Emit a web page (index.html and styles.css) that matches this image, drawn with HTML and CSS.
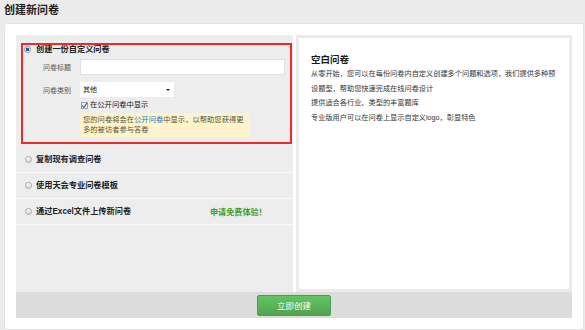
FILE: index.html
```html
<!DOCTYPE html>
<html lang="zh-CN">
<head>
  <meta charset="UTF-8">
  <meta name="viewport" content="width=device-width, initial-scale=1.0">
  <title>创建新问卷</title>
  <link rel="stylesheet" href="styles.css">
</head>
<body>
  <h1 class="page-title">创建新问卷</h1>
  <div class="card">
    <div class="main">
      <div class="options">
        <div class="option-box">
          <div class="option-head">
            <span class="radio checked"></span>
            <span class="option-name">创建一份自定义问卷</span>
          </div>
          <div class="field">
            <label class="field-label">问卷标题</label>
            <input class="text-input" type="text">
          </div>
          <div class="field">
            <label class="field-label">问卷类别</label>
            <div class="select">其他</div>
          </div>
          <div class="check-row">
            <span class="checkbox">
              <svg width="7" height="7" viewBox="0 0 7 7"><path d="M1 3.6 L2.8 5.4 L6 1.2" fill="none" stroke="#3a5f9c" stroke-width="1.2"/></svg>
            </span>
            <span>在公开问卷中显示</span>
          </div>
          <div class="tip">您的问卷将会在<a href="#">公开问卷</a>中显示，以帮助您获得更<br>多的被访者参与答卷</div>
        </div>
        <div class="option-row">
          <span class="radio"></span>
          <span class="option-name">复制现有调查问卷</span>
        </div>
        <div class="option-row">
          <span class="radio"></span>
          <span class="option-name">使用天会专业问卷模板</span>
        </div>
        <div class="option-row">
          <span class="radio"></span>
          <span class="option-name wide">通过Excel文件上传新问卷</span>
          <span class="trial">申请免费体验！</span>
        </div>
      </div>
      <div class="preview">
        <h2 class="preview-title">空白问卷</h2>
        <p>从零开始，您可以在每份问卷内自定义创建多个问题和选项，我们提供多种预设题型，帮助您快速完成在线问卷设计</p>
        <p>提供适合各行业、类型的丰富题库</p>
        <p>专业版用户可以在问卷上显示自定义logo，彰显特色</p>
      </div>
    </div>
    <div class="action-bar">
      <button class="create-btn" type="button">立即创建</button>
    </div>
  </div>
</body>
</html>
```

FILE: styles.css
```css
body {
  margin: 0;
  background-color: #ebebeb;
  font-family: "Liberation Sans", "Noto Sans CJK SC", sans-serif;
  color: #333;
}
.page-title {
  margin: 0;
  padding: 3px 4px 5px;
  font-size: 11px;
  line-height: 15px;
  color: #222;
}
.card {
  margin: 0 1px 0 4px;
  padding: 11px 11px 11px;
  background: white;
  border: 1px solid #e2e2e2;
  border-radius: 3px;
}
.main {
  display: flex;
  gap: 3px;
  height: 257px;
}
.options {
  width: 277px;
  padding-top: 8px;
  background-color: #ededed;
  box-sizing: border-box;
}
.option-box {
  margin: 0 1px 0 5px;
  padding-bottom: 5px;
  border: 2px solid #ee2a2a;
}
.option-head {
  display: flex;
  align-items: center;
  height: 9px;
  padding-left: 1px;
}
.radio {
  width: 5px;
  height: 5px;
  border: 1px solid #a9a9a9;
  border-radius: 50%;
  background: linear-gradient(#fdfdfd, #d6d6d6);
  flex-shrink: 0;
}
.radio.checked {
  background: radial-gradient(circle, #2b57a0 0 1.6px, #dfe6f0 2px);
  border-color: #8c98a8;
}
.option-name {
  margin-left: 4px;
  font-size: 8.2px;
  font-weight: bold;
  line-height: 10px;
  color: #222;
}
.option-head .option-name {
  margin-left: 5px;
}
.field {
  display: flex;
  align-items: center;
  margin-top: 5px;
}
.field + .field {
  margin-top: 7px;
}
.field-label {
  width: 37px;
  padding-left: 20px;
  font-size: 7px;
  color: #555;
}
.text-input {
  width: 205px;
  height: 16px;
  margin: 0;
  padding: 0 3px;
  border: 1px solid #e0e0e0;
  box-sizing: border-box;
  background: white;
}
.select {
  position: relative;
  width: 94px;
  height: 15px;
  padding-left: 3px;
  box-sizing: border-box;
  background: white;
  font-size: 7px;
  line-height: 15px;
  color: #222;
}
.select::after {
  content: "";
  position: absolute;
  right: 4px;
  top: 7px;
  border-left: 2px solid transparent;
  border-right: 2px solid transparent;
  border-top: 2px solid #222;
}
.check-row {
  display: flex;
  align-items: center;
  margin: 4px 0 0 58px;
  font-size: 7.3px;
  line-height: 8px;
  color: #222;
}
.checkbox {
  display: flex;
  width: 7px;
  height: 7px;
  margin-right: 2px;
  border: 1px solid #9aa3ad;
  background: #f3f3f3;
  box-sizing: border-box;
  align-items: center;
  justify-content: center;
}
.checkbox svg {
  flex-shrink: 0;
}
.tip {
  width: 170px;
  margin: 4px 0 0 57px;
  padding: 2px 3px 2px;
  box-sizing: border-box;
  background-color: #fdf4cb;
  border-radius: 3px;
  font-size: 7.3px;
  line-height: 10px;
  color: #5f5238;
}
.tip a {
  color: #2a78d0;
  text-decoration: none;
}
.option-row {
  display: flex;
  align-items: center;
  height: 25px;
  padding-left: 9px;
  border-bottom: 1px solid #f8f8f8;
}
.option-box + .option-row {
  margin-top: 3px;
}
.option-name.wide {
  width: 174px;
}
.trial {
  font-size: 8.1px;
  font-weight: bold;
  color: #3c9e2e;
}
.preview {
  flex: 1;
  padding: 15px 12px 0 12px;
  border: 3px solid #ebebeb;
  background: white;
}
.preview-title {
  margin: 0 0 1px;
  font-size: 9.5px;
  line-height: 13px;
  color: #1a1a1a;
}
.preview p {
  margin: 0;
  font-size: 7.2px;
  line-height: 14.5px;
  color: #333;
}
.action-bar {
  display: flex;
  justify-content: center;
  align-items: center;
  height: 26px;
  background-color: #dcdcdc;
}
.create-btn {
  width: 74px;
  height: 21px;
  padding: 0;
  border: 1px solid #4b9e4b;
  border-radius: 2px;
  background: linear-gradient(#62c462, #51a351);
  color: white;
  font-family: "Noto Sans CJK SC", sans-serif;
  font-size: 8.5px;
  cursor: pointer;
}
```
